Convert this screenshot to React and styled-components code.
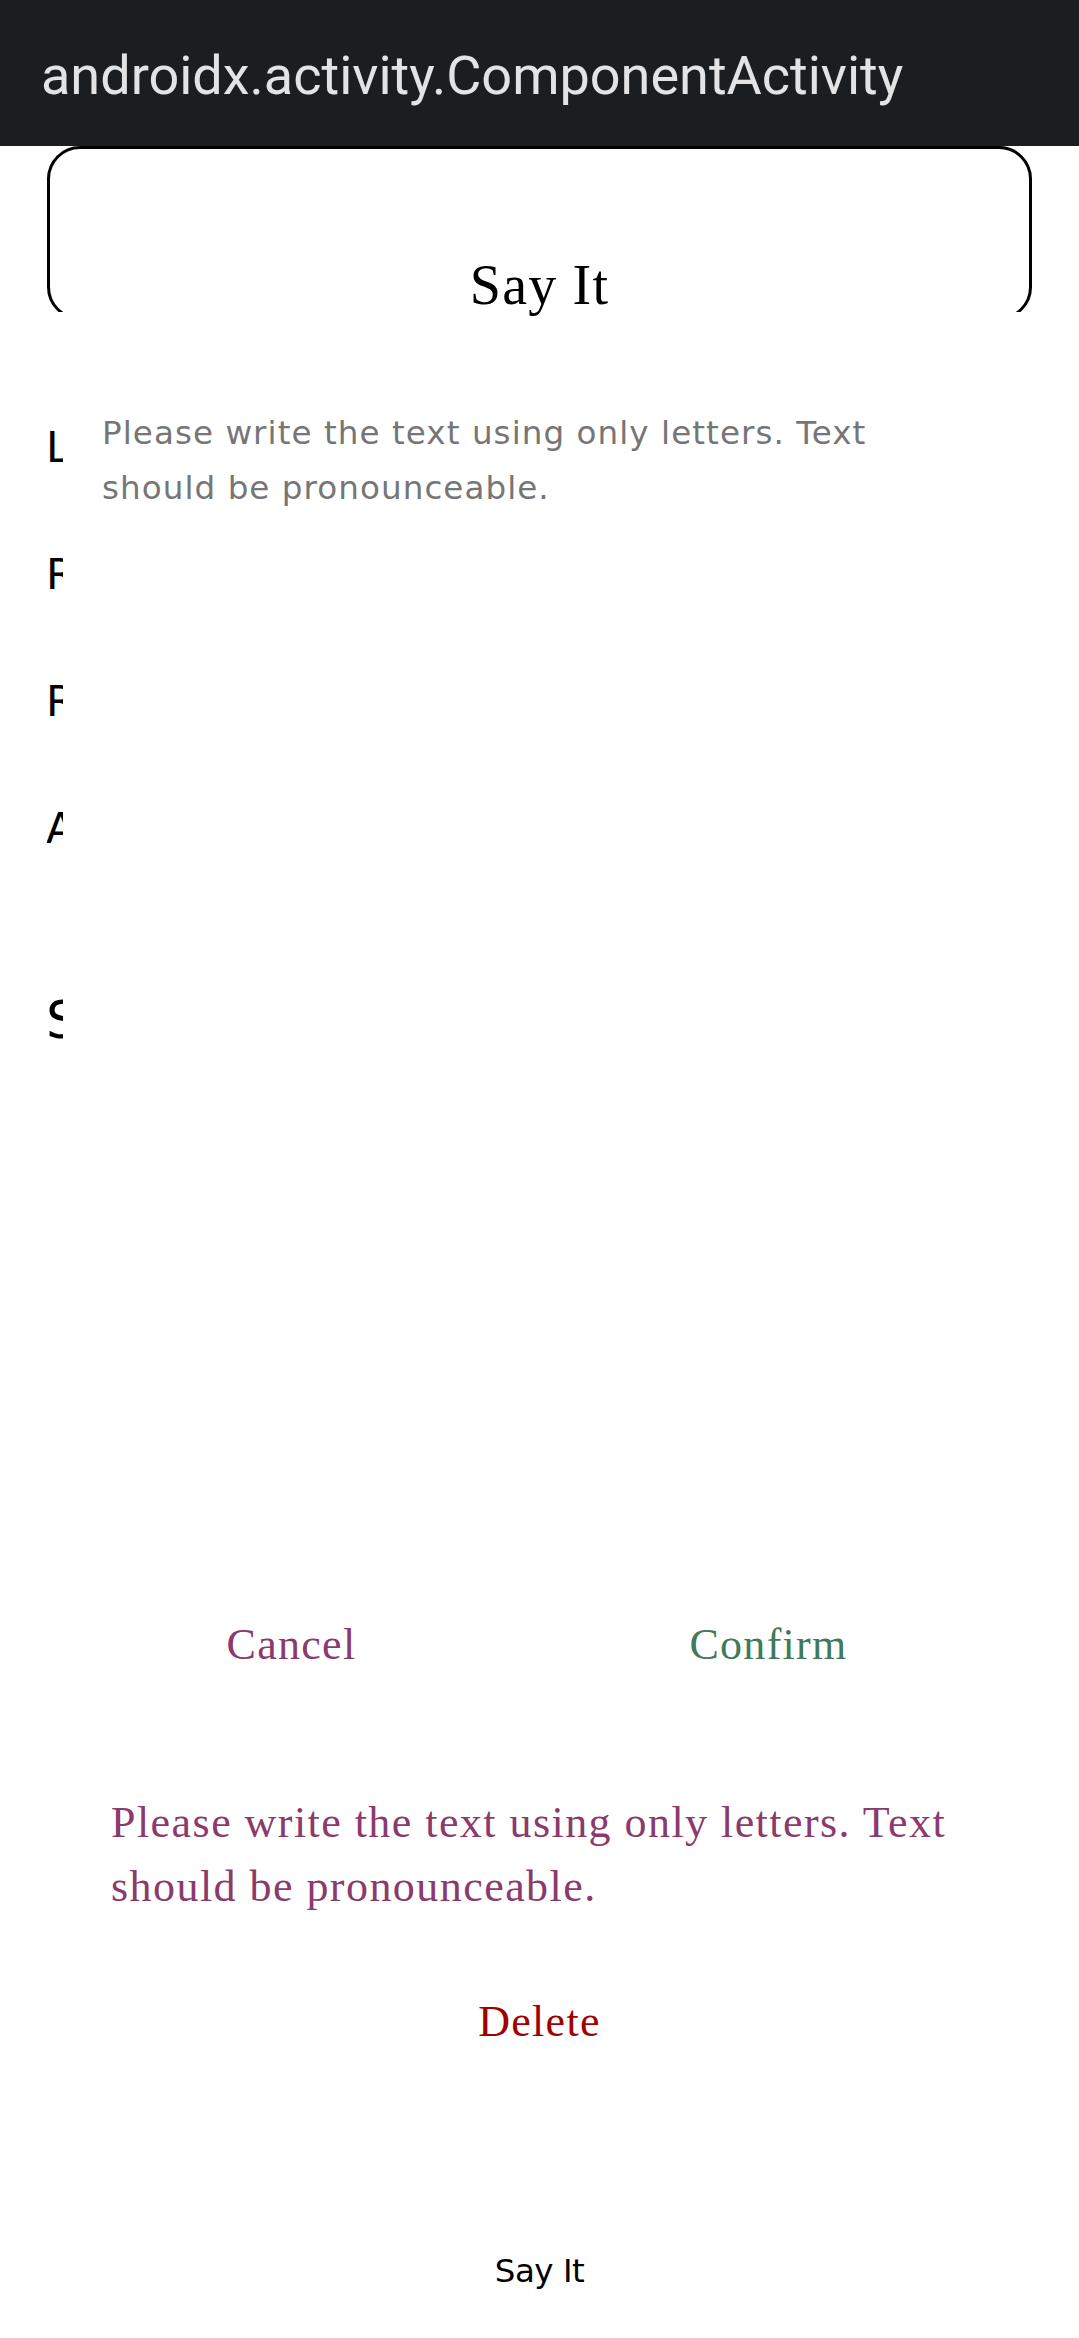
import React from "react";
import styled, { createGlobalStyle } from "styled-components";

const GlobalStyle = createGlobalStyle`
  html, body {
    margin: 0;
    padding: 0;
    background: #ffffff;
  }
  body {
    font-family: "DejaVu Sans", sans-serif;
  }
  * {
    box-sizing: border-box;
  }
`;

const Page = styled.div`
  min-height: 2338px;
  background: #ffffff;
  display: flex;
  flex-direction: column;
`;

const TopBar = styled.header`
  height: 146px;
  padding: 5px 0 0 41px;
  background: #1b1e21;
  color: #e3e3e3;
  font-family: Roboto, "Liberation Sans", sans-serif;
  font-size: 54px;
  line-height: 141px;
  white-space: nowrap;
`;

const CardStack = styled.div`
  display: grid;
  margin: 0 47px;
  height: 166px;
`;

const CardClip = styled.div`
  grid-area: 1 / 1;
  height: 166px;
  overflow: hidden;
`;

const Card = styled.section`
  height: 174px;
  border: 3px solid #000000;
  border-radius: 33px;
`;

const CardTitle = styled.h1`
  grid-area: 1 / 1;
  align-self: start;
  justify-self: center;
  margin: 107px 0 0;
  font-family: "Liberation Serif", serif;
  font-weight: 400;
  font-size: 56px;
  line-height: 64px;
  letter-spacing: 1.2px;
  color: #000000;
`;

const Body = styled.div`
  display: flex;
  padding-left: 47px;
`;

const SideStrip = styled.div`
  width: 16px;
  overflow: hidden;
  padding-top: 72px;
  display: flex;
  flex-direction: column;
  white-space: nowrap;
  color: #000000;
  font-family: "DejaVu Sans", sans-serif;
`;

const SideLabel = styled.div`
  margin-left: -1px;
  margin-top: ${(p) => p.$gap || 0}px;
  font-size: ${(p) => (p.$big ? 52 : 42.5)}px;
  line-height: 127px;
`;

const Sheet = styled.div`
  flex: 1;
  margin-right: 63px;
  display: flex;
  flex-direction: column;
`;

const Message = styled.p`
  margin: 94px 0 0;
  padding: 0 90px 0 39px;
  font-family: "DejaVu Sans", sans-serif;
  font-size: 32.6px;
  line-height: 55px;
  letter-spacing: 1.05px;
  color: #767676;
`;

const Actions = styled.div`
  display: grid;
  grid-template-columns: 1fr 1fr;
  margin: 1099px 9px 0 -10px;
`;

const TextButton = styled.button`
  background: none;
  border: 0;
  padding: 0;
  font-family: "Liberation Serif", serif;
  font-size: 44px;
  line-height: 60px;
  letter-spacing: 1.3px;
  text-align: center;
  color: ${(p) => p.$tone};
  cursor: pointer;
`;

const Warning = styled.p`
  margin: 116px 0 0;
  padding: 0 36px 0 48px;
  font-family: "Liberation Serif", serif;
  font-size: 44px;
  line-height: 64px;
  letter-spacing: 1.45px;
  color: #8b3a6d;
`;

const DeleteButton = styled(TextButton)`
  align-self: center;
  margin-top: 73px;
`;

const FooterLabel = styled.div`
  margin-top: 194px;
  text-align: center;
  font-family: "DejaVu Sans", sans-serif;
  font-size: 32.5px;
  line-height: 50px;
  letter-spacing: -0.5px;
  color: #000000;
`;

const sideLabels = [
  { text: "Language" },
  { text: "Rate" },
  { text: "Repeat" },
  { text: "Audio" },
  { text: "Say It", big: true, gap: 65 },
];

const warningText =
  "Please write the text using only letters. Text should be pronounceable.";

export default function App() {
  return (
    <>
      <GlobalStyle />
      <Page>
        <TopBar>androidx.activity.ComponentActivity</TopBar>
        <CardStack>
          <CardClip>
            <Card />
          </CardClip>
          <CardTitle>Say It</CardTitle>
        </CardStack>
        <Body>
          <SideStrip>
            {sideLabels.map((l) => (
              <SideLabel key={l.text} $big={l.big} $gap={l.gap}>
                {l.text}
              </SideLabel>
            ))}
          </SideStrip>
          <Sheet>
            <Message>{warningText}</Message>
            <Actions>
              <TextButton $tone="#8b3a6d">Cancel</TextButton>
              <TextButton $tone="#3f7a5a">Confirm</TextButton>
            </Actions>
            <Warning>{warningText}</Warning>
            <DeleteButton $tone="#a10000">Delete</DeleteButton>
            <FooterLabel>Say It</FooterLabel>
          </Sheet>
        </Body>
      </Page>
    </>
  );
}
